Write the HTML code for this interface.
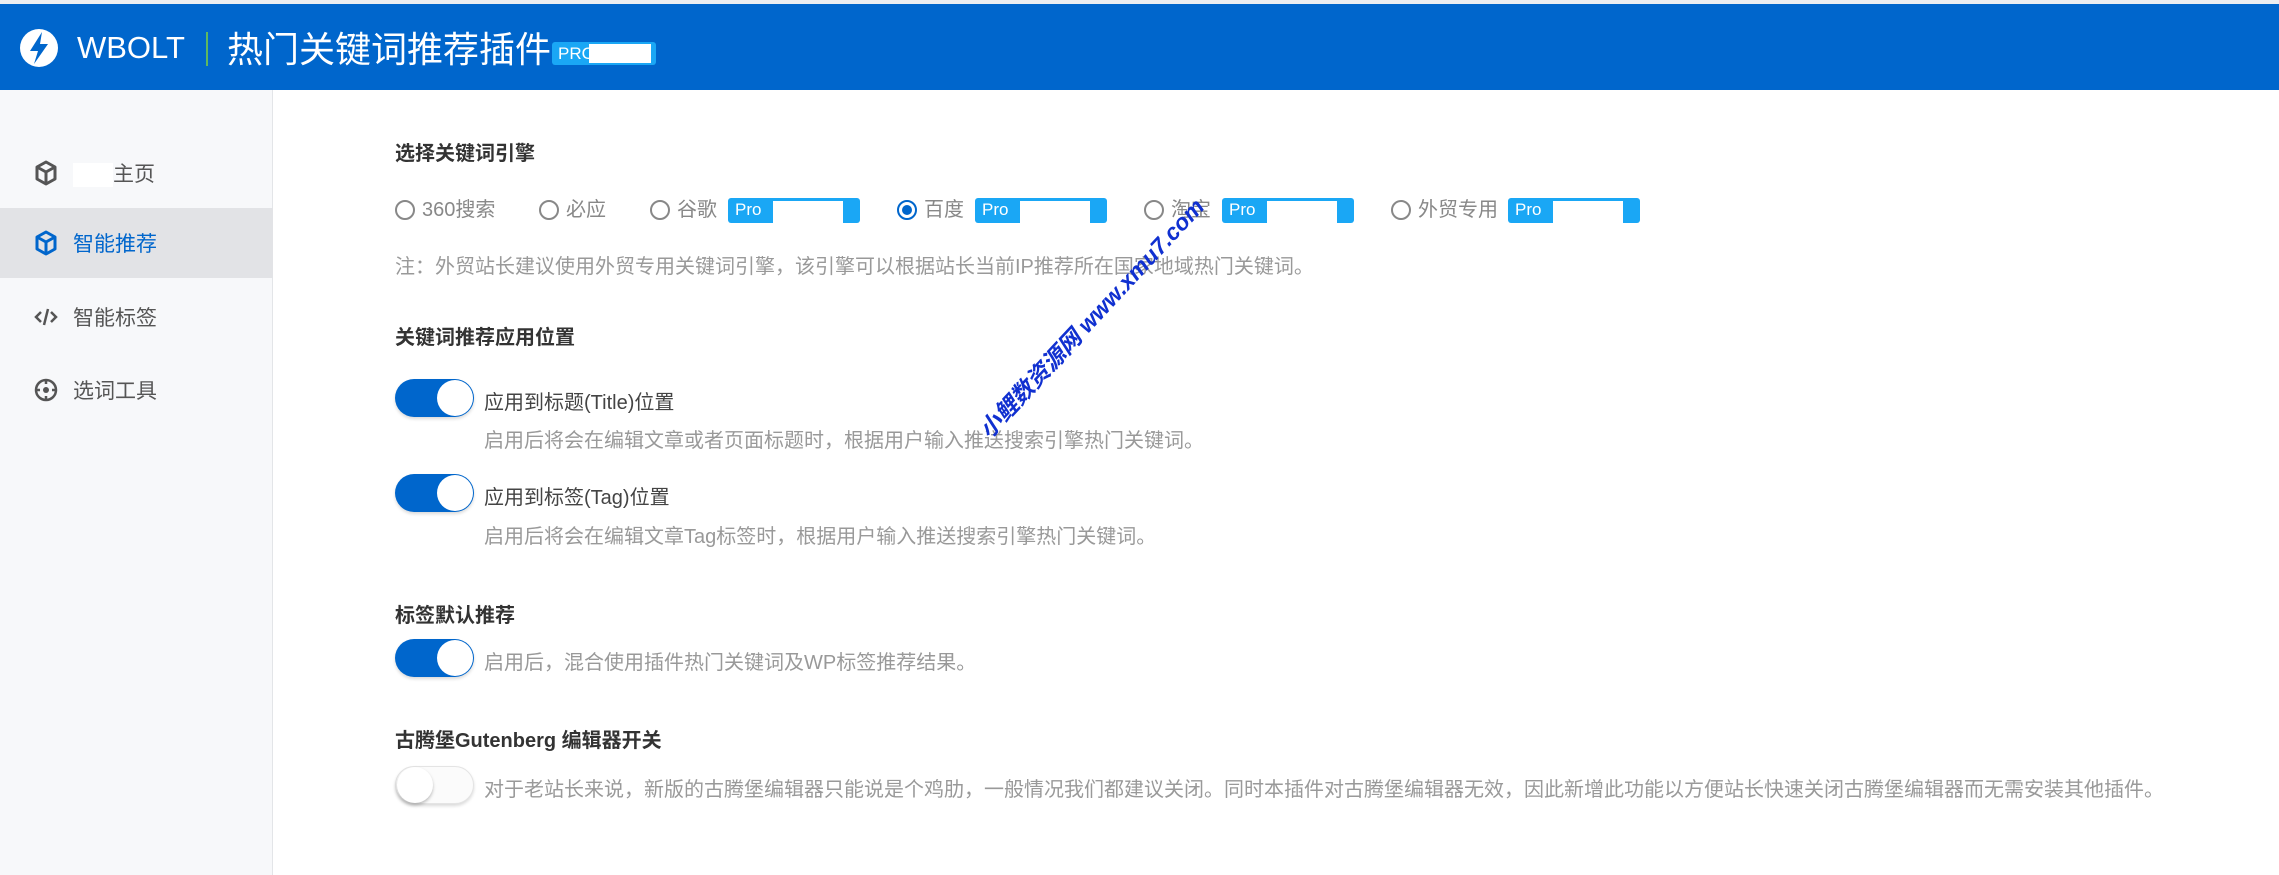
<!DOCTYPE html>
<html><head><meta charset="utf-8"><style>
*{margin:0;padding:0;box-sizing:border-box}
body{width:2279px;height:875px;overflow:hidden;background:#fff;font-family:"Liberation Sans","Noto Sans CJK SC",sans-serif;position:relative}
.top{position:absolute;left:0;top:0;width:2279px;height:4px;background:#eceef1}
.hd{position:absolute;left:0;top:4px;width:2279px;height:86px;background:#0066cc;color:#fff}
.side{position:absolute;left:0;top:90px;width:273px;height:785px;background:#f7f8fa;border-right:1px solid #e3e5e8}
.abs{position:absolute;white-space:nowrap}
.nav{position:absolute;left:0;width:273px;height:70px;font-size:21px;color:#555}
.nav span{position:absolute;left:73px;top:50%;transform:translateY(-50%)}
.nav svg{position:absolute;left:34px;top:50%;transform:translateY(-50%)}
.h{font-size:20px;font-weight:bold;color:#333}
.g{font-size:20px;color:#999}
.r{position:absolute;top:198px;height:24px;font-size:20px;color:#888;white-space:nowrap}
.r i{position:absolute;left:0;top:2px;width:20px;height:20px;border:2px solid #888;border-radius:50%}
.r b{position:absolute;left:27px;top:0;font-weight:normal;line-height:24px}
.pro{position:absolute;top:0;width:132px;height:25px;background:#1aa7f5;border-radius:3px}
.pro em{position:absolute;left:7px;top:2px;font-style:normal;color:#fff;font-size:17px}
.pro u{position:absolute;left:45px;top:3px;width:70px;height:22px;background:#fff}
.tg{position:absolute;left:395px;width:79px;height:38px;border-radius:19px;background:#0066cc;box-shadow:0 2px 3px rgba(0,0,0,.15)}
.tg:after{content:"";position:absolute;right:1px;top:1px;width:36px;height:36px;border-radius:50%;background:#fff}
.tg.off{background:#fbfbfb;border:1px solid #e4e4e4}
.tg.off:after{left:1px;right:auto;top:0;box-shadow:0 2px 3px rgba(0,0,0,.25)}
.lb{font-size:20px;color:#444}
</style></head><body>
<div class="top"></div>
<div class="hd">
 <svg class="abs" style="left:18px;top:23px" width="42" height="42" viewBox="0 0 42 42"><circle cx="21" cy="21" r="19" fill="#fff"/><path d="M24 5 L12 24 H20 L16 37 L30 17 H22 Z" fill="#0066cc"/></svg>
 <div class="abs" style="left:77px;top:26px;font-size:31px;color:#fff">WBOLT</div>
 <div class="abs" style="left:206px;top:28px;width:2px;height:34px;background:#5fb85f"></div>
 <div class="abs" style="left:227px;top:17px;font-size:36px;color:#fff">热门关键词推荐插件</div>
 <div class="abs" style="left:552px;top:38px;width:104px;height:23px;background:#1aa7f5;border-radius:3px"><span class="abs" style="left:6px;top:2px;font-size:17px">PRO</span><span class="abs" style="left:37px;top:2px;width:62px;height:19px;background:#fff"></span></div>
</div>
<div class="side">
 <div class="nav" style="top:48px"><svg width="24" height="26" viewBox="0 0 24 26"><path d="M12 2 L21 7 V19 L12 24 L3 19 V7 Z M3 7 L12 12 L21 7 M12 12 V24" fill="none" stroke="#555" stroke-width="3" stroke-linejoin="round"/></svg><span><i style="display:inline-block;width:40px;height:24px;background:#fff;vertical-align:middle"></i>主页</span></div>
 <div class="nav" style="top:118px;background:#e2e3e6;color:#0066cc"><svg width="24" height="26" viewBox="0 0 24 26"><path d="M12 2 L21 7 V19 L12 24 L3 19 V7 Z M3 7 L12 12 L21 7 M12 12 V24" fill="none" stroke="#0066cc" stroke-width="3" stroke-linejoin="round"/></svg><span>智能推荐</span></div>
 <div class="nav" style="top:192px"><svg width="24" height="24" viewBox="0 0 24 24"><path d="M7 7 L2 12 L7 17 M17 7 L22 12 L17 17 M14 4 L10 20" fill="none" stroke="#555" stroke-width="2.5"/></svg><span>智能标签</span></div>
 <div class="nav" style="top:265px"><svg width="24" height="24" viewBox="0 0 24 24"><circle cx="12" cy="12" r="10" fill="none" stroke="#555" stroke-width="2.5"/><circle cx="12" cy="12" r="3" fill="#555"/><path d="M12 2V6M12 18V22M2 12H6M18 12H22" stroke="#555" stroke-width="2.5"/></svg><span>选词工具</span></div>
</div>

<div class="abs h" style="left:395px;top:137px">选择关键词引擎</div>
<div class="r" style="left:395px"><i></i><b>360搜索</b></div>
<div class="r" style="left:539px"><i></i><b>必应</b></div>
<div class="r" style="left:650px"><i></i><b>谷歌</b><div class="pro" style="left:78px"><em>Pro</em><u></u></div></div>
<div class="r" style="left:897px"><i style="border-color:#0066cc"></i><i style="left:5px;top:7px;width:10px;height:10px;border:0;background:#0066cc"></i><b>百度</b><div class="pro" style="left:78px"><em>Pro</em><u></u></div></div>
<div class="r" style="left:1144px"><i></i><b>淘宝</b><div class="pro" style="left:78px"><em>Pro</em><u></u></div></div>
<div class="r" style="left:1391px"><i></i><b>外贸专用</b><div class="pro" style="left:117px"><em>Pro</em><u></u></div></div>
<div class="abs g" style="left:395px;top:250px">注：外贸站长建议使用外贸专用关键词引擎，该引擎可以根据站长当前IP推荐所在国家地域热门关键词。</div>

<div class="abs h" style="left:395px;top:321px">关键词推荐应用位置</div>
<div class="tg" style="top:379px"></div>
<div class="abs lb" style="left:484px;top:386px">应用到标题(Title)位置</div>
<div class="abs g" style="left:484px;top:424px">启用后将会在编辑文章或者页面标题时，根据用户输入推送搜索引擎热门关键词。</div>
<div class="tg" style="top:474px"></div>
<div class="abs lb" style="left:484px;top:481px">应用到标签(Tag)位置</div>
<div class="abs g" style="left:484px;top:520px">启用后将会在编辑文章Tag标签时，根据用户输入推送搜索引擎热门关键词。</div>

<div class="abs h" style="left:395px;top:599px">标签默认推荐</div>
<div class="tg" style="top:639px"></div>
<div class="abs g" style="left:484px;top:646px">启用后，混合使用插件热门关键词及WP标签推荐结果。</div>

<div class="abs h" style="left:395px;top:724px">古腾堡Gutenberg 编辑器开关</div>
<div class="tg off" style="top:766px"></div>
<div class="abs g" style="left:484px;top:773px">对于老站长来说，新版的古腾堡编辑器只能说是个鸡肋，一般情况我们都建议关闭。同时本插件对古腾堡编辑器无效，因此新增此功能以方便站长快速关闭古腾堡编辑器而无需安装其他插件。</div>

<div class="abs" style="left:900px;top:300px;width:380px;text-align:center;transform:rotate(-47deg);font-size:23px;font-weight:bold;font-style:italic;color:#1030d0">小鲤数资源网 www.xmu7.com</div>
</body></html>
